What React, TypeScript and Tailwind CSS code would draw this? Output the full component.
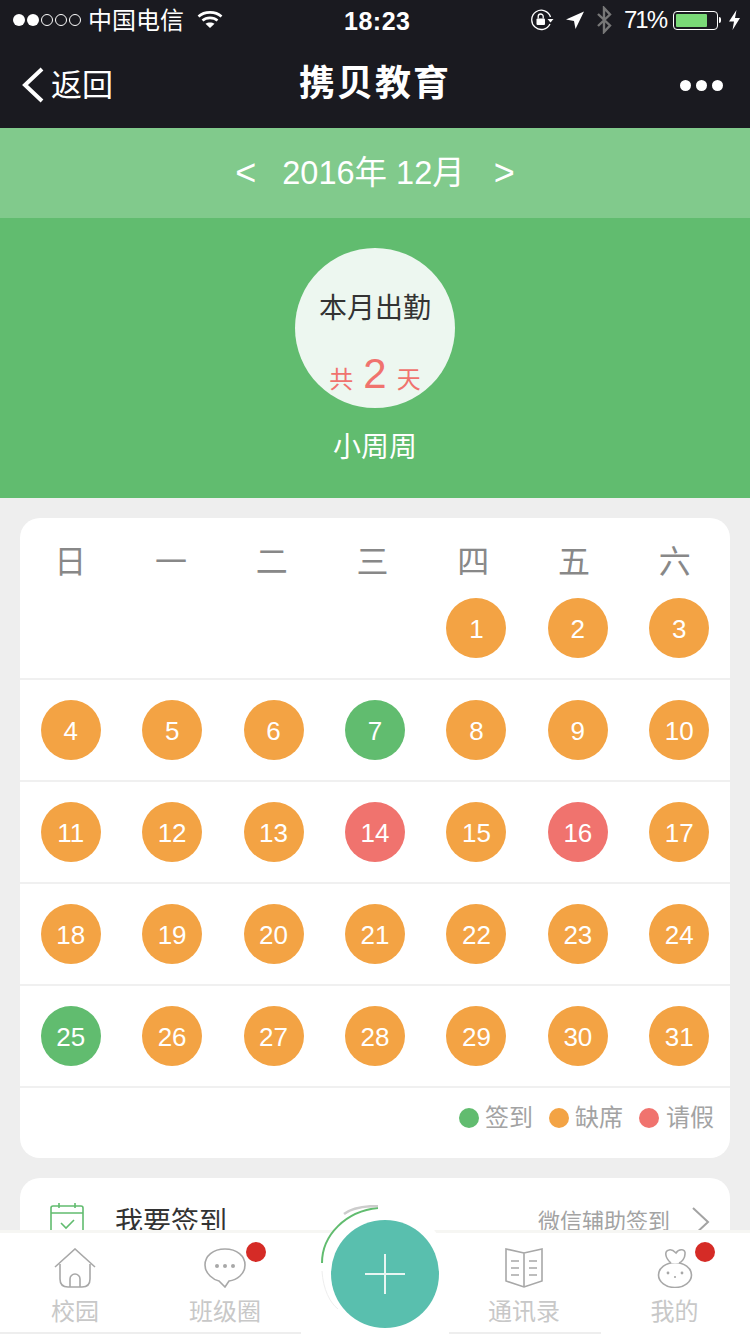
const FONT = '"Liberation Sans", "Noto Sans CJK SC", sans-serif';

type Status = 'absent' | 'present' | 'leave';

const WEEK = ['日', '一', '二', '三', '四', '五', '六'];

const COLORS: Record<Status, string> = {
  absent: 'bg-[#f3a344]',
  present: 'bg-[#61bc6f]',
  leave: 'bg-[#f0736e]',
};

const PRESENT = [7, 25];
const LEAVE = [14, 16];

// December 2016 starts on a Thursday
const ROWS: (number | null)[][] = [
  [null, null, null, null, 1, 2, 3],
  [4, 5, 6, 7, 8, 9, 10],
  [11, 12, 13, 14, 15, 16, 17],
  [18, 19, 20, 21, 22, 23, 24],
  [25, 26, 27, 28, 29, 30, 31],
];

function statusOf(day: number): Status {
  if (PRESENT.includes(day)) return 'present';
  if (LEAVE.includes(day)) return 'leave';
  return 'absent';
}

function StatusBar() {
  return (
    <div className="flex h-10 items-center justify-between pl-[13px] pr-[9px] text-white">
      <div className="flex items-center">
        <div className="flex items-center gap-[2px]">
          <span className="h-[12px] w-[12px] rounded-full bg-white" />
          <span className="h-[12px] w-[12px] rounded-full bg-white" />
          <span className="h-[12px] w-[12px] rounded-full border border-white" />
          <span className="h-[12px] w-[12px] rounded-full border border-white" />
          <span className="h-[12px] w-[12px] rounded-full border border-white" />
        </div>
        <span className="ml-[7px] pt-[2px] text-[24px] leading-none">中国电信</span>
        <svg width="26" height="20" viewBox="0 0 26 20" className="ml-[13px]" fill="none" stroke="white" strokeWidth="2.6">
          <path d="M1.5 6.5 C7.5 1 18.5 1 24.5 6.5" />
          <path d="M5.5 10.5 C9.5 7 16.5 7 20.5 10.5" />
          <path d="M13 18 L8.5 13.8 C11 12 15 12 17.5 13.8 Z" fill="white" stroke="none" />
        </svg>
      </div>
      <span className="absolute left-[344px] top-[6px] text-[25px] font-bold leading-[30px] tracking-[0.5px]">18:23</span>
      <div className="flex items-center">
        <svg width="24" height="22" viewBox="0 0 24 22" fill="none">
          <path d="M20.5 8 A9.6 9.6 0 1 0 20 15" stroke="white" strokeWidth="1.3" />
          <path d="M17.5 10 h6 l-3 3.4 z" fill="white" />
          <rect x="6.5" y="9.5" width="8.5" height="6.5" rx="1" fill="white" />
          <path d="M8.2 9.5 V7.5 a2.5 2.5 0 0 1 5 0 V9.5" stroke="white" strokeWidth="1.3" />
        </svg>
        <svg width="20" height="20" viewBox="0 0 20 20" className="ml-[11px]">
          <path d="M19 1.5 L10.5 19 L9 11 L1 9.5 Z" fill="white" />
        </svg>
        <svg width="16" height="28" viewBox="0 0 16 28" className="ml-[11px]" fill="none" stroke="#777777" strokeWidth="2.4">
          <path d="M2 8 L14 19.5 L8 26 V2 L14 8.5 L2 20" />
        </svg>
        <span className="ml-[12px] text-[24px] leading-none tracking-[-2px]">71%</span>
        <div className="ml-[7px] flex items-center">
          <div className="h-[19px] w-[45px] rounded-[4px] border border-white p-[2px]">
            <div className="h-full w-[31px] rounded-[1px] bg-[#7ad977]" />
          </div>
          <div className="ml-[1px] h-[6px] w-[2px] rounded-r-full bg-white" />
        </div>
        <svg width="13" height="20" viewBox="0 0 13 20" className="ml-[7px]">
          <path d="M8.5 0 L1 11.5 H6 L4.5 20 L12 8 H7 Z" fill="white" />
        </svg>
      </div>
    </div>
  );
}

function NavBar() {
  return (
    <div className="relative flex h-[88px] items-center justify-between pl-[22px] pr-[27px] pt-[2px] text-white">
      <div className="flex items-center">
        <svg width="22" height="36" viewBox="0 0 22 36" fill="none" stroke="white" strokeWidth="4">
          <path d="M20 2 L3 18 L20 34" />
        </svg>
        <span className="ml-[7px] text-[31px] leading-none">返回</span>
      </div>
      <span className="absolute left-[299px] top-[21px] text-[36px] font-bold leading-[46px] tracking-[2px]">携贝教育</span>
      <div className="flex items-center gap-[5px]">
        <span className="h-[11px] w-[11px] rounded-full bg-white" />
        <span className="h-[11px] w-[11px] rounded-full bg-white" />
        <span className="h-[11px] w-[11px] rounded-full bg-white" />
      </div>
    </div>
  );
}

function Summary() {
  return (
    <div className="bg-[#61bc6f]">
      <div className="flex h-[90px] items-center justify-center bg-[#81ca8c] text-[32.5px] leading-none text-white">
        <span className="mr-[26px] text-[36px]">&lt;</span>
        <span>2016年 12月</span>
        <span className="ml-[29px] text-[36px]">&gt;</span>
      </div>
      <div className="flex h-[280px] flex-col items-center pt-[30px]">
        <div className="flex h-[160px] w-[160px] flex-col items-center rounded-full bg-[#edf7f0]">
          <span className="mt-[45px] text-[28px] leading-[32px] text-[#333333]">本月出勤</span>
          <div className="mt-[29px] flex items-baseline text-[#f0736e]">
            <span className="text-[24px] leading-[40px]">共</span>
            <span className="mx-[10px] text-[42px] leading-[40px]">2</span>
            <span className="text-[24px] leading-[40px]">天</span>
          </div>
        </div>
        <span className="mt-[22px] text-[28px] leading-[36px] text-white">小周周</span>
      </div>
    </div>
  );
}

function Calendar() {
  return (
    <div className="mx-5 mt-5 h-[640px] rounded-[20px] bg-white">
      <div className="grid h-[80px] grid-cols-7 pr-[5px] pt-[8px]">
        {WEEK.map((w) => (
          <span key={w} className="flex items-center justify-center text-[32px] leading-none text-[#888888]">
            {w}
          </span>
        ))}
      </div>
      {ROWS.map((row, i) => (
        <div key={i} className={`grid grid-cols-7 border-b-2 border-[#f0f0f0] ${i === 0 ? 'h-[82px]' : 'h-[102px] pt-5'}`}>
          {row.map((day, j) => (
            <div key={j} className="flex items-start justify-center">
              {day !== null && (
                <span
                  className={`flex h-[60px] w-[60px] items-center justify-center rounded-full pt-[2px] text-[26px] leading-none text-white ${COLORS[statusOf(day)]}`}
                >
                  {day}
                </span>
              )}
            </div>
          ))}
        </div>
      ))}
      <div className="flex h-[60px] items-center justify-end pr-[16px] text-[24px] leading-[30px] text-[#a3a3a3]">
        <span className="h-5 w-5 rounded-full bg-[#61bc6f]" />
        <span className="ml-[6px] mr-[16px]">签到</span>
        <span className="h-5 w-5 rounded-full bg-[#f3a344]" />
        <span className="ml-[6px] mr-[16px]">缺席</span>
        <span className="h-5 w-5 rounded-full bg-[#f0736e]" />
        <span className="ml-[7px]">请假</span>
      </div>
    </div>
  );
}

function SignCard() {
  return (
    <div className="mx-5 mt-5 flex h-[120px] items-start justify-between rounded-[20px] bg-white pl-[30px] pr-[20px] pt-[24px]">
      <div className="flex items-center">
        <svg width="34" height="36" viewBox="0 0 34 36" fill="none" stroke="#61bc6f" strokeWidth="1.6">
          <rect x="1" y="4" width="32" height="31" rx="2" />
          <path d="M1 11 H33 M9 1 V6 M25 1 V6" />
          <path d="M11 21 L16 26 L24 18" />
        </svg>
        <span className="ml-[31px] mt-[6px] text-[28px] leading-none text-[#333333]">我要签到</span>
      </div>
      <div className="flex items-center pt-[3px]">
        <span className="text-[22px] leading-[34px] text-[#a3a3a3]">微信辅助签到</span>
        <svg width="18" height="30" viewBox="0 0 18 30" className="ml-[22px]" fill="none" stroke="#a3a3a3" strokeWidth="2">
          <path d="M1 1 L16 15 L1 29" />
        </svg>
      </div>
    </div>
  );
}

function TabItem({ label, dot, className, children }: { label: string; dot?: boolean; className: string; children: React.ReactNode }) {
  return (
    <div className={`relative flex flex-col items-center ${className}`}>
      <div className="flex h-[40px] items-end">{children}</div>
      {dot && <span className="absolute left-[96px] top-[-6px] h-5 w-5 rounded-full bg-[#d52b26]" />}
      <span className="mt-[9px] text-[24px] leading-[30px] text-[#c8c8c8]">{label}</span>
    </div>
  );
}

function TabBar() {
  return (
    <div className="absolute inset-x-0 bottom-0 h-[101px] bg-white shadow-[0_-3px_0_#f6f6f3]">
      <div className="flex h-[99px] pt-[15px]">
        <TabItem label="校园" className="w-[150px]">
          <svg width="42" height="40" viewBox="0 0 42 40" fill="none" stroke="#a8a8a8" strokeWidth="1.6">
            <path d="M1 19 L21 1 L41 19" />
            <path d="M6 16 V31 Q6 39 14 39 H28 Q36 39 36 31 V16" />
            <path d="M16 39 V31 a5 5 0 0 1 10 0 V39" />
          </svg>
        </TabItem>
        <TabItem label="班级圈" dot className="w-[150px]">
          <svg width="42" height="40" viewBox="0 0 42 40" fill="none" stroke="#a8a8a8" strokeWidth="1.6">
            <path d="M21 1 C9 1 1 8 1 17 C1 26 10 32 15 33 L21 39 L25 33 C33 32 41 26 41 17 C41 8 33 1 21 1 Z" />
            <circle cx="13" cy="18" r="2" fill="#a8a8a8" stroke="none" />
            <circle cx="21" cy="18" r="2" fill="#a8a8a8" stroke="none" />
            <circle cx="29" cy="18" r="2" fill="#a8a8a8" stroke="none" />
          </svg>
        </TabItem>
        <div className="w-[149px]" />
        <TabItem label="通讯录" className="w-[150px]">
          <svg width="38" height="40" viewBox="0 0 38 40" fill="none" stroke="#a8a8a8" strokeWidth="1.6">
            <path d="M19 5 L1 1 V33 L19 39 L37 33 V1 Z M19 5 V39" />
            <path d="M6 13 H14 M6 20 H14 M6 27 H14 M24 13 H32 M24 20 H32 M24 27 H32" />
          </svg>
        </TabItem>
        <TabItem label="我的" dot className="w-[151px]">
          <svg width="36" height="40" viewBox="0 0 36 40" fill="none" stroke="#a8a8a8" strokeWidth="1.6">
            <ellipse cx="18" cy="27" rx="16.5" ry="12.5" />
            <path d="M14 15 C8 10 7 3 12 2 C15 1 17 3 19 5 C22 0 29 1 28 6 C28 10 25 14 22 15" fill="white" />
            <circle cx="11" cy="25" r="1.4" fill="#a8a8a8" stroke="none" />
            <circle cx="25" cy="25" r="1.4" fill="#a8a8a8" stroke="none" />
            <path d="M18 28 v2" />
          </svg>
        </TabItem>
      </div>
      <div className="flex h-[2px]">
        <div className="w-[301px] bg-[#eeeeee]" />
        <div className="w-[148px]" />
        <div className="w-[152px] bg-[#eeeeee]" />
      </div>
      {/* center add button with its arc behind */}
      <div className="absolute left-[321px] top-[-26px] h-[128px] w-[128px] rounded-t-full bg-white" />
      <svg width="80" height="120" viewBox="0 0 80 120" className="absolute left-[318px] top-[-28px]" fill="none">
        <path d="M4 58 C4 30 28 6 60 3" stroke="#61bc6f" strokeWidth="2" />
        <path d="M26 9 C34 3 46 1 60 1" stroke="#cccccc" strokeWidth="2.5" />
        <path d="M4 66 C5 84 12 98 20 104" stroke="#eeeeee" strokeWidth="1" />
      </svg>
      <div className="absolute left-[331px] top-[-13px] flex h-[108px] w-[108px] items-center justify-center rounded-full bg-[#59bfae]">
        <svg width="40" height="40" viewBox="0 0 40 40" stroke="#e8f5f2" strokeWidth="2">
          <path d="M0 20 H40 M20 0 V40" />
        </svg>
      </div>
    </div>
  );
}

export default function App() {
  return (
    <div className="relative h-[1334px] w-[750px] overflow-hidden bg-[#eeeeee]" style={{ fontFamily: FONT }}>
      <div className="bg-[#1a1a20]">
        <StatusBar />
        <NavBar />
      </div>
      <Summary />
      <Calendar />
      <SignCard />
      <TabBar />
    </div>
  );
}
